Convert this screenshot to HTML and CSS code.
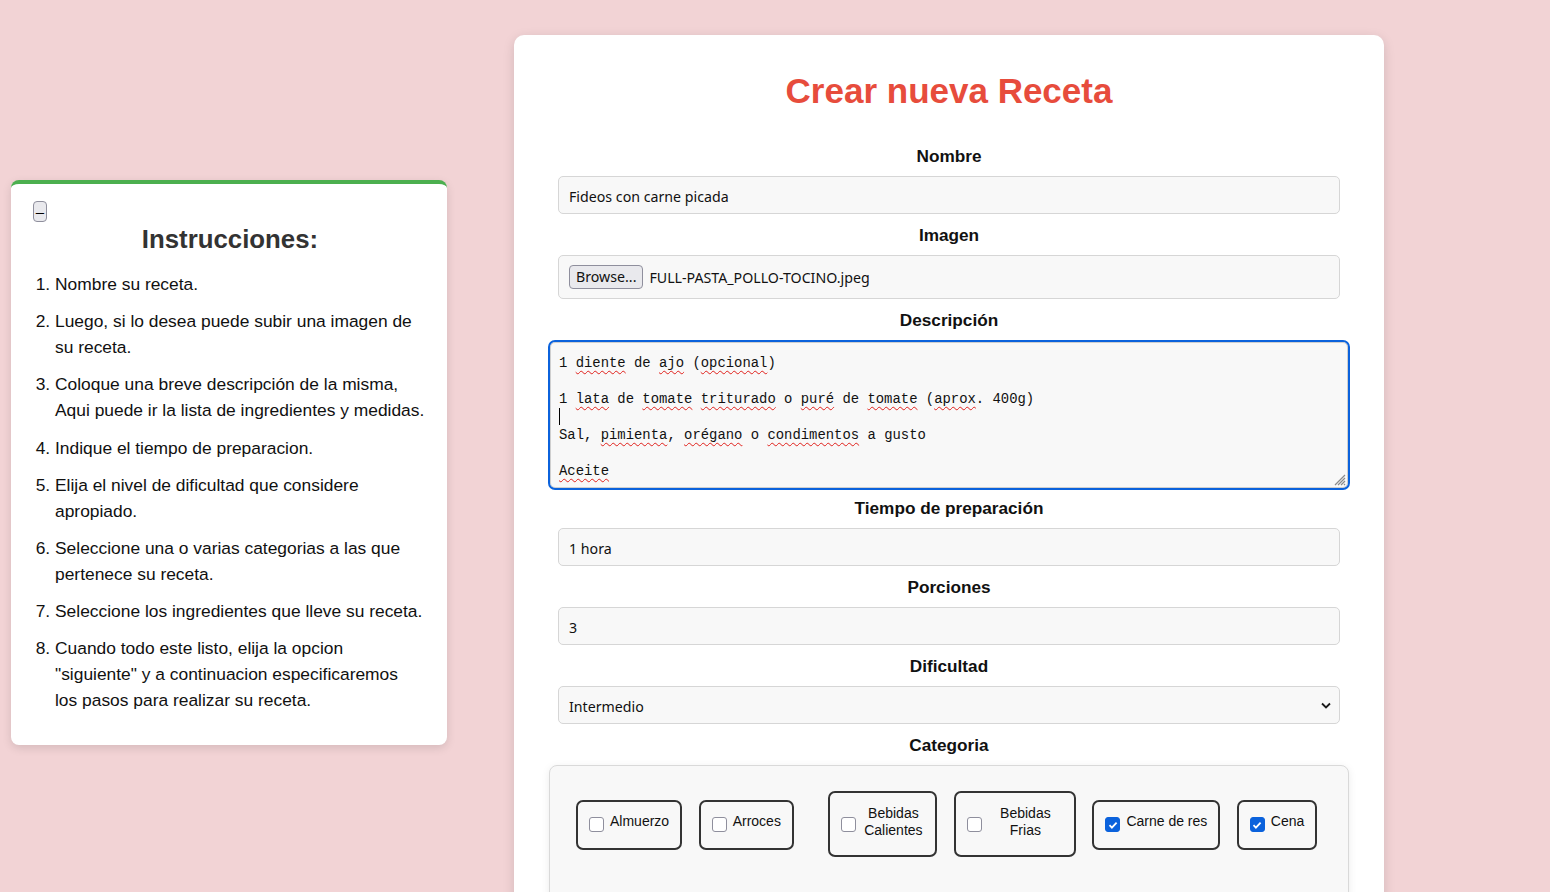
FILE: index.html
```html
<!DOCTYPE html>
<html lang="es">
<head>
<meta charset="utf-8">
<title>Crear nueva Receta</title>
<link rel="stylesheet" href="styles.css">
</head>
<body>
<div class="page">
  <aside class="help">
    <button class="toggle" type="button">–</button>
    <h2 class="help-title">Instrucciones:</h2>
    <ol class="help-list">
      <li>Nombre su receta.</li>
      <li>Luego, si lo desea puede subir una imagen de su receta.</li>
      <li>Coloque una breve descripción de la misma, Aqui puede ir la lista de ingredientes y medidas.</li>
      <li>Indique el tiempo de preparacion.</li>
      <li>Elija el nivel de dificultad que considere apropiado.</li>
      <li>Seleccione una o varias categorias a las que pertenece su receta.</li>
      <li>Seleccione los ingredientes que lleve su receta.</li>
      <li>Cuando todo este listo, elija la opcion "siguiente" y a continuacion especificaremos los&nbsp;pasos para realizar su receta.</li>
    </ol>
  </aside>

  <main class="card">
    <h1 class="title">Crear nueva Receta</h1>
    <form class="form">
      <label class="field-label">Nombre</label>
      <div class="field">Fideos con carne picada</div>

      <label class="field-label">Imagen</label>
      <div class="field field--file"><span class="browse">Browse...</span><span>FULL-PASTA_POLLO-TOCINO.jpeg</span></div>

      <label class="field-label">Descripción</label>
      <div class="desc">
        <div class="desc-line">1 <span class="sp">diente</span> de <span class="sp">ajo</span> (<span class="sp">opcional</span>)</div>
        <div class="desc-line"></div>
        <div class="desc-line">1 <span class="sp">lata</span> de <span class="sp">tomate</span> <span class="sp">triturado</span> o <span class="sp">puré</span> de <span class="sp">tomate</span> (<span class="sp">aprox</span>. 400g)</div>
        <div class="desc-line"><span class="caret"></span></div>
        <div class="desc-line">Sal, <span class="sp">pimienta</span>, <span class="sp">orégano</span> o <span class="sp">condimentos</span> a gusto</div>
        <div class="desc-line"></div>
        <div class="desc-line"><span class="sp">Aceite</span></div>
        <svg class="grip" width="14" height="14" viewBox="0 0 14 14"><path d="M13 3L3 13M13 6L6 13M13 9L9 13M13 12L12 13" stroke="#8a8a8a" stroke-width="1.2"/></svg>
      </div>

      <label class="field-label">Tiempo de preparación</label>
      <div class="field">1 hora</div>

      <label class="field-label">Porciones</label>
      <div class="field">3</div>

      <label class="field-label">Dificultad</label>
      <div class="field field--select">Intermedio
        <svg class="chevron" width="10" height="7" viewBox="0 0 10 7"><path d="M1 1.5l4 4 4-4" fill="none" stroke="#1b1b1b" stroke-width="1.8"/></svg>
      </div>

      <label class="field-label">Categoria</label>
      <div class="cats">
        <div class="cat"><span class="cb"></span><span class="cat-text">Almuerzo</span></div>
        <div class="cat"><span class="cb"></span><span class="cat-text">Arroces</span></div>
        <div class="cat cat--two cat--calientes"><span class="cb"></span><span class="cat-text">Bebidas Calientes</span></div>
        <div class="cat cat--two cat--frias"><span class="cb"></span><span class="cat-text">Bebidas Frias</span></div>
        <div class="cat"><span class="cb cb--on"><svg width="10" height="10" viewBox="0 0 10 10"><path d="M1.5 5.2l2.4 2.4L8.6 2.6" fill="none" stroke="#fff" stroke-width="1.8"/></svg></span><span class="cat-text">Carne de res</span></div>
        <div class="cat"><span class="cb cb--on"><svg width="10" height="10" viewBox="0 0 10 10"><path d="M1.5 5.2l2.4 2.4L8.6 2.6" fill="none" stroke="#fff" stroke-width="1.8"/></svg></span><span class="cat-text">Cena</span></div>
      </div>
    </form>
  </main>
</div>
</body>
</html>
```
FILE: styles.css
```css
html, body {
  margin: 0;
  overflow: hidden;
}
body {
  background: #f2d3d5;
  font-family: "Liberation Sans", Arial, sans-serif;
  font-size: 17.2px;
  color: #111;
}
.page {
  display: flex;
  align-items: flex-start;
  gap: 67px;
  padding: 35px 0 0 11px;
}

/* Left instructions card */
.help {
  box-sizing: border-box;
  width: 436px;
  margin-top: 145px;
  background: #fff;
  border-top: 4px solid #4caf4f;
  border-radius: 8px;
  box-shadow: 0 3px 10px rgba(0, 0, 0, 0.12);
  padding: 17px 20px 20px 22px;
  font-size: 17.4px;
}
.toggle {
  display: block;
  box-sizing: border-box;
  width: 14px;
  height: 21px;
  padding: 0;
  margin: 0;
  border: 1px solid #8f8f9d;
  border-radius: 4px;
  background: #e9e9ed;
  color: #000;
  font-family: "Liberation Sans", sans-serif;
  font-size: 15px;
  line-height: 19px;
  text-align: center;
}
.help-title {
  margin: 2px 0 17px;
  font-size: 25.8px;
  line-height: 30px;
  text-align: center;
  color: #333;
}
.help-list {
  margin: 0;
  padding-left: 22px;
  color: #111;
}
.help-list li {
  line-height: 26px;
  margin-bottom: 11.2px;
}

/* Main card */
.card {
  box-sizing: border-box;
  width: 870px;
  background: #fff;
  border-radius: 10px;
  box-shadow: 0 3px 12px rgba(0, 0, 0, 0.13);
  padding: 36px 34px 40px;
}
.title {
  margin: 0 0 35px;
  font-size: 35px;
  line-height: 40px;
  text-align: center;
  color: #e74c3c;
}
.form {
  display: flex;
  flex-direction: column;
}
.field-label {
  display: block;
  font-weight: bold;
  line-height: 20px;
  text-align: center;
  margin-bottom: 10px;
  color: #111;
}
.field {
  box-sizing: border-box;
  position: relative;
  height: 38px;
  margin: 0 10px 11px;
  padding: 0 10px;
  border: 1px solid #d6d6d6;
  border-radius: 5px;
  background: #f8f8f8;
  font-family: "Noto Sans", sans-serif;
  font-size: 14.2px;
  line-height: 39px;
  color: #111;
}
.field--file {
  height: 44px;
  display: flex;
  align-items: center;
  gap: 6px;
  line-height: normal;
}
.browse {
  box-sizing: border-box;
  height: 24px;
  padding: 0 6px;
  border: 1px solid #8f8f9d;
  border-radius: 4px;
  background: #e9e9ed;
  line-height: 22px;
}
.chevron {
  position: absolute;
  right: 8px;
  top: 15px;
}

/* Description textarea */
.desc {
  box-sizing: border-box;
  position: relative;
  height: 146px;
  margin: 2px 2px 10px;
  padding: 11px 8px 10px;
  border: 1px solid #cfcfcf;
  border-radius: 5px;
  outline: 2px solid #0b62dc;
  background: #f8f8f8;
  font-family: "Liberation Mono", "DejaVu Sans Mono", monospace;
  font-size: 13.9px;
  line-height: 18px;
  color: #111;
  overflow: hidden;
}
.desc-line {
  height: 18px;
  white-space: nowrap;
}
.sp {
  text-decoration: underline wavy #e0201b;
  text-decoration-thickness: 1px;
  text-underline-offset: 3px;
  text-decoration-skip-ink: none;
}
.caret {
  display: inline-block;
  width: 1px;
  height: 17px;
  background: #000;
  vertical-align: -4px;
}
.grip {
  position: absolute;
  right: 1px;
  bottom: 1px;
}

/* Categories */
.cats {
  box-sizing: border-box;
  display: flex;
  align-items: flex-start;
  gap: 16.5px;
  min-height: 200px;
  margin: 0 1px;
  padding: 25px 26px 60px;
  border: 1px solid #d9d9d9;
  border-radius: 8px;
  background: #f8f8f8;
  box-shadow: 0 2px 8px rgba(0, 0, 0, 0.08);
}
.cat {
  box-sizing: border-box;
  display: flex;
  align-items: center;
  margin-top: 9px;
  padding: 11px 11px 18px;
  border: 2px solid #333;
  border-radius: 7px;
  font-size: 14px;
  line-height: 17px;
  color: #111;
}
.cat--two {
  margin-top: 0;
  padding-top: 11.5px;
  padding-bottom: 16.5px;
}
.cat--calientes {
  margin-left: 18px;
}
.cat--calientes .cat-text {
  width: 62px;
  text-align: center;
}
.cat--frias .cat-text {
  width: 75px;
  text-align: center;
}
.cb {
  box-sizing: border-box;
  flex: none;
  display: inline-flex;
  align-items: center;
  justify-content: center;
  width: 15px;
  height: 15px;
  margin: 3px 6px -3px 0;
  border: 1px solid #8f8f9d;
  border-radius: 3px;
  background: #fff;
}
.cb--on {
  background: #0b62dc;
  border-color: #0b62dc;
}
```
